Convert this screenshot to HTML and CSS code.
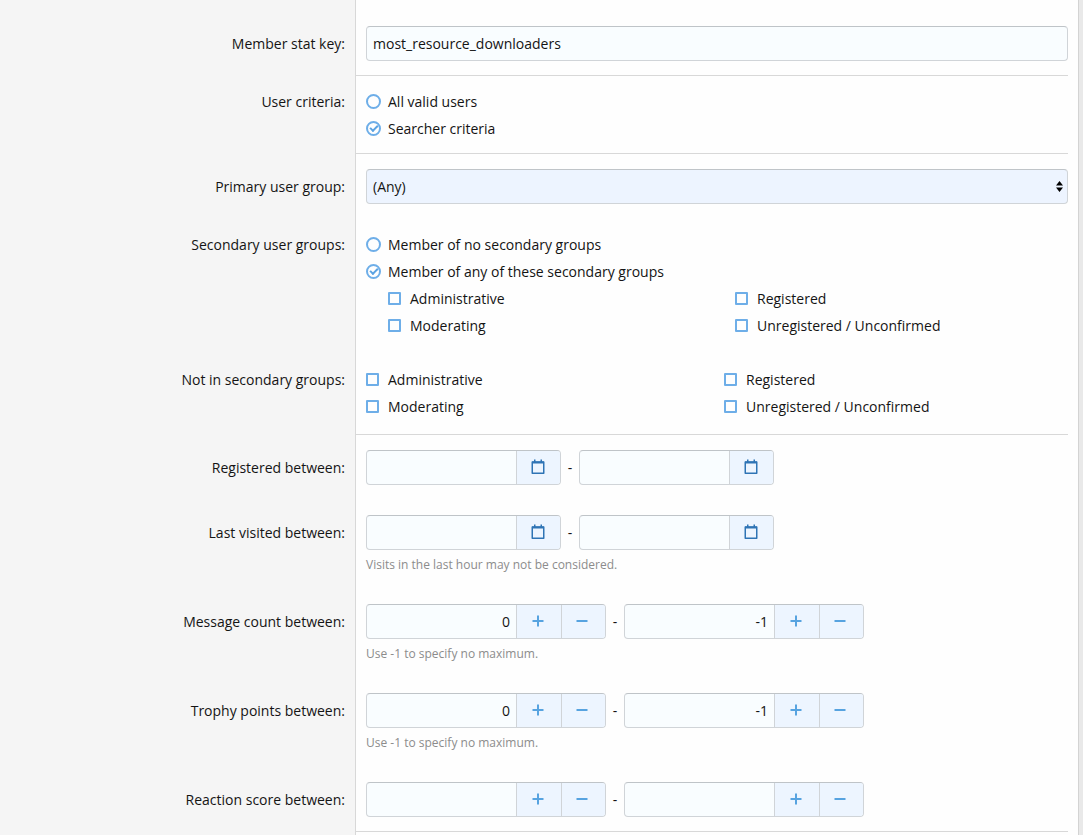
FILE: index.html
```
<!DOCTYPE html>
<html lang="en">
<head>
  <meta charset="UTF-8">
  <meta name="viewport" content="width=device-width, initial-scale=1.0">
  <title>Edit member stat</title>
  <link rel="stylesheet" href="styles.css">
</head>
<body>
  <svg class="sprite" width="0" height="0" aria-hidden="true">
    <symbol id="calendar" viewBox="0 0 14 16">
      <path d="M1.25 3h11.5v11.25H1.25z" fill="none" stroke="currentColor" stroke-width="1.5" stroke-linejoin="round"/>
      <path d="M1 2.5h12v2H1zM3 0.5h1.5v2H3zM9.5 0.5H11v2H9.5z" fill="currentColor"/>
    </symbol>
    <symbol id="plus" viewBox="0 0 12 12">
      <path d="M6 0.5v11M0.5 6h11" fill="none" stroke="currentColor" stroke-width="2"/>
    </symbol>
    <symbol id="minus" viewBox="0 0 12 12">
      <path d="M0.5 6h11" fill="none" stroke="currentColor" stroke-width="2"/>
    </symbol>
  </svg>

  <form class="block">
    <div class="row row-input row-line">
      <div class="row-label"><label for="statKey">Member stat key:</label></div>
      <div class="row-body">
        <input class="input" type="text" id="statKey" value="most_resource_downloaders">
      </div>
    </div>

    <div class="row row-line">
      <div class="row-label" id="criteriaLabel">User criteria:</div>
      <div class="row-body choices" role="radiogroup" aria-labelledby="criteriaLabel">
        <label class="choice"><input type="radio" name="criteria">All valid users</label>
        <label class="choice"><input type="radio" name="criteria" checked>Searcher criteria</label>
      </div>
    </div>

    <div class="row row-input">
      <div class="row-label"><label for="primaryGroup">Primary user group:</label></div>
      <div class="row-body">
        <div class="select-wrap">
          <select class="input select" id="primaryGroup">
            <option>(Any)</option>
            <option>Administrative</option>
            <option>Moderating</option>
            <option>Registered</option>
          </select>
          <svg class="select-arrow" viewBox="0 0 7 11" aria-hidden="true"><path d="M3.5 0L7 4.5H0zM3.5 11L0 6.5h7z"/></svg>
        </div>
      </div>
    </div>

    <div class="row">
      <div class="row-label" id="secondaryLabel">Secondary user groups:</div>
      <div class="row-body choices" role="group" aria-labelledby="secondaryLabel">
        <label class="choice"><input type="radio" name="secondary">Member of no secondary groups</label>
        <label class="choice"><input type="radio" name="secondary" checked>Member of any of these secondary groups</label>
        <div class="columns nested">
          <label class="choice"><input type="checkbox">Administrative</label>
          <label class="choice"><input type="checkbox">Registered</label>
          <label class="choice"><input type="checkbox">Moderating</label>
          <label class="choice"><input type="checkbox">Unregistered / Unconfirmed</label>
        </div>
      </div>
    </div>

    <div class="row row-line">
      <div class="row-label" id="notInLabel">Not in secondary groups:</div>
      <div class="row-body" role="group" aria-labelledby="notInLabel">
        <div class="columns">
          <label class="choice"><input type="checkbox">Administrative</label>
          <label class="choice"><input type="checkbox">Registered</label>
          <label class="choice"><input type="checkbox">Moderating</label>
          <label class="choice"><input type="checkbox">Unregistered / Unconfirmed</label>
        </div>
      </div>
    </div>

    <div class="row row-input">
      <div class="row-label"><label for="regFrom">Registered between:</label></div>
      <div class="row-body">
        <div class="range">
          <div class="group">
            <input type="text" id="regFrom">
            <button type="button" class="date" aria-label="Pick date"><svg><use href="#calendar"/></svg></button>
          </div>
          <span class="dash">-</span>
          <div class="group">
            <input type="text" aria-label="Registered before">
            <button type="button" class="date" aria-label="Pick date"><svg><use href="#calendar"/></svg></button>
          </div>
        </div>
      </div>
    </div>

    <div class="row row-input">
      <div class="row-label"><label for="visitFrom">Last visited between:</label></div>
      <div class="row-body">
        <div class="range">
          <div class="group">
            <input type="text" id="visitFrom">
            <button type="button" class="date" aria-label="Pick date"><svg><use href="#calendar"/></svg></button>
          </div>
          <span class="dash">-</span>
          <div class="group">
            <input type="text" aria-label="Last visited before">
            <button type="button" class="date" aria-label="Pick date"><svg><use href="#calendar"/></svg></button>
          </div>
        </div>
        <div class="hint">Visits in the last hour may not be considered.</div>
      </div>
    </div>

    <div class="row row-input">
      <div class="row-label"><label for="msgMin">Message count between:</label></div>
      <div class="row-body">
        <div class="range">
          <div class="group group-number">
            <input type="number" id="msgMin" value="0">
            <button type="button" aria-label="Increase"><svg><use href="#plus"/></svg></button>
            <button type="button" aria-label="Decrease"><svg><use href="#minus"/></svg></button>
          </div>
          <span class="dash">-</span>
          <div class="group group-number">
            <input type="number" aria-label="Maximum messages" value="-1">
            <button type="button" aria-label="Increase"><svg><use href="#plus"/></svg></button>
            <button type="button" aria-label="Decrease"><svg><use href="#minus"/></svg></button>
          </div>
        </div>
        <div class="hint">Use -1 to specify no maximum.</div>
      </div>
    </div>

    <div class="row row-input">
      <div class="row-label"><label for="trophyMin">Trophy points between:</label></div>
      <div class="row-body">
        <div class="range">
          <div class="group group-number">
            <input type="number" id="trophyMin" value="0">
            <button type="button" aria-label="Increase"><svg><use href="#plus"/></svg></button>
            <button type="button" aria-label="Decrease"><svg><use href="#minus"/></svg></button>
          </div>
          <span class="dash">-</span>
          <div class="group group-number">
            <input type="number" aria-label="Maximum trophy points" value="-1">
            <button type="button" aria-label="Increase"><svg><use href="#plus"/></svg></button>
            <button type="button" aria-label="Decrease"><svg><use href="#minus"/></svg></button>
          </div>
        </div>
        <div class="hint">Use -1 to specify no maximum.</div>
      </div>
    </div>

    <div class="row row-input row-line">
      <div class="row-label"><label for="reactMin">Reaction score between:</label></div>
      <div class="row-body">
        <div class="range">
          <div class="group group-number">
            <input type="number" id="reactMin">
            <button type="button" aria-label="Increase"><svg><use href="#plus"/></svg></button>
            <button type="button" aria-label="Decrease"><svg><use href="#minus"/></svg></button>
          </div>
          <span class="dash">-</span>
          <div class="group group-number">
            <input type="number" aria-label="Maximum reaction score">
            <button type="button" aria-label="Increase"><svg><use href="#plus"/></svg></button>
            <button type="button" aria-label="Decrease"><svg><use href="#minus"/></svg></button>
          </div>
        </div>
      </div>
    </div>
  </form>
</body>
</html>
```
FILE: styles.css
```
*, *::before, *::after { box-sizing: border-box; }
body {
  margin: 0;
  padding-right: 4px;
  background-color: #e9e9e9;
  color: #141414;
  font-family: 'Segoe UI', 'Open Sans', sans-serif;
  font-size: 14px;
  line-height: 21px;
}
.sprite {
  position: absolute;
}
input, select, button {
  font: inherit;
  color: inherit;
  margin: 0;
}

/* the grey label column runs the full height of the block */
.block {
  min-height: 100vh;
  padding: 11px 10px 0 0;
  border-right: 1px solid #d3d3d3;
  background-color: #fefefe;
  display: flex;
  flex-direction: column;
}
.block::before,
.block::after {
  content: "";
  width: calc(100% / 3);
  background-color: #f5f5f5;
  border-right: 1px solid #d8d8d8;
}
.block::before {
  height: 11px;
  margin-top: -11px;
}
.block::after {
  flex: 1;
}

.row {
  display: grid;
  grid-template-columns: 1fr 2fr;
}
.row-label {
  padding: 15px 10px 15px 15px;
  background-color: #f5f5f5;
  border-right: 1px solid #d8d8d8;
  text-align: right;
}
.row-input .row-label {
  padding-top: 22px;
}
.row-body {
  min-width: 0;
  padding: 15px 0 15px 10px;
}
.row-line .row-body {
  padding-bottom: 14px;
  border-bottom: 1px solid #d8d8d8;
}

.input {
  display: block;
  width: 100%;
  height: 35px;
  padding: 6px;
  border: 1px solid #d0d4d8;
  border-top-color: #bfc4c8;
  border-radius: 4px;
  background-color: #f9fdff;
}
.select-wrap {
  position: relative;
}
.select {
  appearance: none;
  background-color: #edf4ff;
}
.select-arrow {
  position: absolute;
  top: 12px;
  right: 5px;
  width: 7px;
  height: 11px;
  pointer-events: none;
}

.choices {
  display: flex;
  flex-direction: column;
  gap: 6px;
}
.choice {
  display: grid;
  grid-template-columns: 15px 1fr;
  column-gap: 7px;
  align-items: center;
}
.choice input {
  appearance: none;
  display: grid;
  place-items: center;
  width: 13px;
  height: 13px;
  border: 2px solid #6eaee8;
  border-radius: 1px;
}
.choice input[type="radio"] {
  width: 15px;
  height: 15px;
  border-radius: 50%;
}
.choice input[type="radio"]:checked::after {
  content: "";
  width: 8px;
  height: 5px;
  margin-bottom: 2px;
  border: solid #5aa2e2;
  border-width: 0 0 2px 2px;
  transform: rotate(-45deg);
}
.columns {
  display: grid;
  grid-template-columns: 1fr 1fr;
  gap: 6px 14px;
  padding-bottom: 3px;
}
.nested {
  margin-left: 22px;
}

.range {
  display: flex;
}
.dash {
  width: 18px;
  line-height: 35px;
  text-align: center;
}
.group {
  display: flex;
  width: 195px;
  height: 35px;
  border: 1px solid #d0d4d8;
  border-top-color: #bfc4c8;
  border-radius: 4px;
  background-color: #f9fdff;
  overflow: hidden;
}
.group-number {
  width: 240px;
}
.group input {
  width: 149px;
  padding: 6px;
  border: none;
  background: none;
}
.group input[type="number"] {
  appearance: textfield;
  text-align: right;
}
.group input::-webkit-inner-spin-button {
  appearance: none;
  margin: 0;
}
.group button {
  flex: 1;
  display: grid;
  place-items: center;
  padding: 0 2px 1px 0;
  border: none;
  border-left: 1px solid #d0d4d8;
  background-color: #edf5ff;
  color: #57a3e0;
  cursor: pointer;
}
.group button svg {
  width: 12px;
  height: 12px;
}
.group .date {
  color: #2f74b5;
}
.group .date svg {
  width: 14px;
  height: 16px;
}
.hint {
  margin-top: 6px;
  color: #8c8c8c;
  font-size: 12px;
  line-height: 18px;
}
```
